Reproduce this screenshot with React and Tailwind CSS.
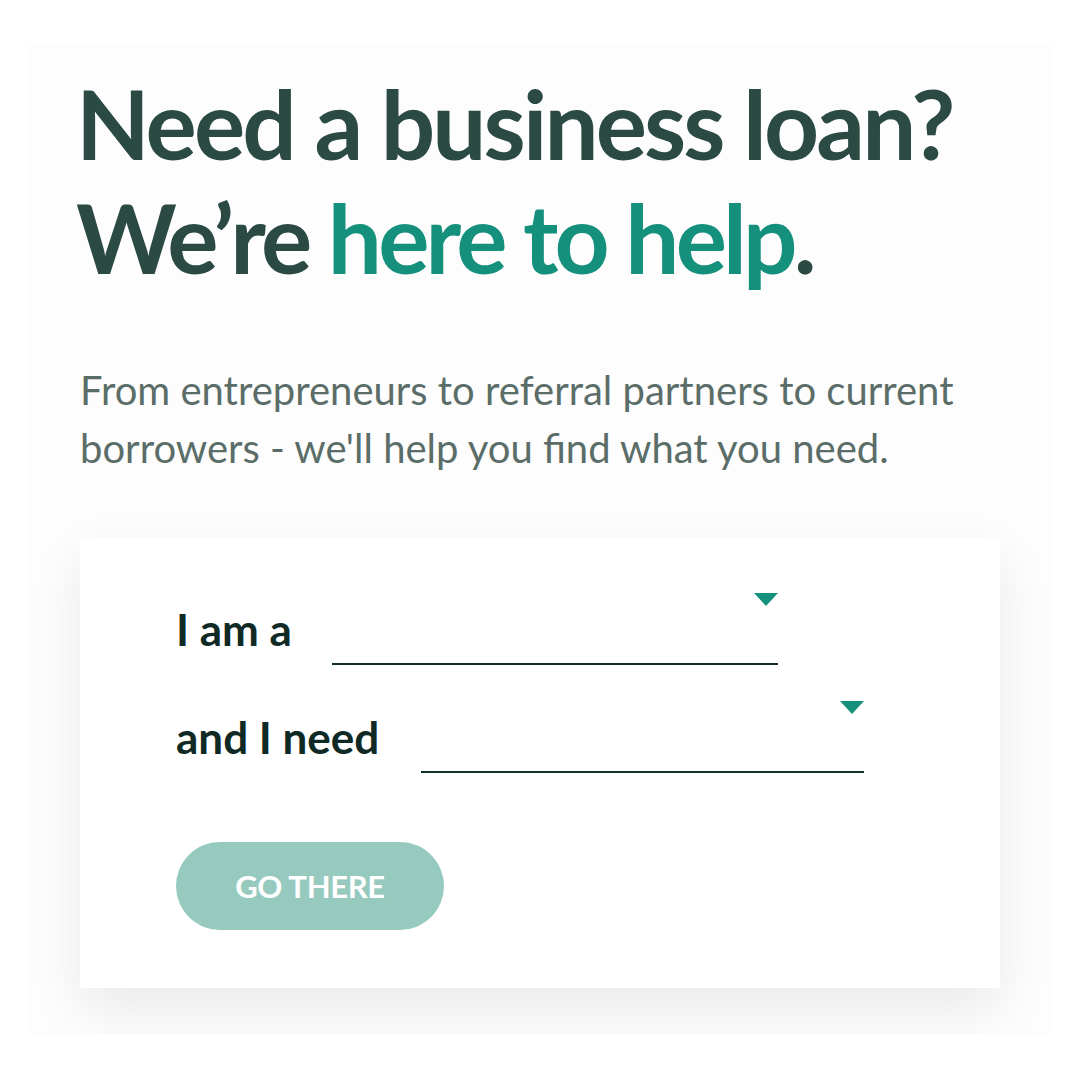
import React from 'react';

function Picker({ width }) {
  return (
    <div className={`relative h-[72px] border-b-2 border-[#12302a] ${width}`}>
      <span className="absolute right-0 top-0 h-0 w-0 border-x-[12px] border-t-[13px] border-x-transparent border-t-[#14907c]" />
    </div>
  );
}

export default function App() {
  return (
    <div className="min-h-[1080px] bg-white pt-[43px] pl-[29px] font-['Lato',sans-serif]">
      <div className="w-[1021px] h-[992px] overflow-hidden bg-[#fdfdfd] pl-[51px] pr-[50px] pt-[23px]">
        <h1 className="-ml-[4px] text-[96px] font-bold leading-[114px] tracking-[-0.03em] text-[#2b4a44]">
          Need a business loan?
          <br />
          <span className="tracking-[-0.04em]">
            We’re <span className="text-[#14907c]">here to help</span>.
          </span>
        </h1>

        <p className="mt-[67px] text-[40px] leading-[58px] text-[#5b6d68]">
          From entrepreneurs to referral partners to current borrowers - we'll help you find what you
          need.
        </p>

        <div className="mt-[60px] bg-white pl-[96px] pr-[40px] pt-[56px] pb-[58px] shadow-[0_22px_50px_rgba(0,0,0,0.08)]">
          <div className="flex items-center gap-10">
            <span className="text-[44px] font-bold leading-[46px] text-[#0f2a25]">I am a</span>
            <Picker width="w-[446px]" />
          </div>
          <div className="mt-[36px] flex items-center gap-[42px]">
            <span className="text-[44px] font-bold leading-[46px] text-[#0f2a25]">and I need</span>
            <Picker width="w-[443px]" />
          </div>

          <button
            type="button"
            className="mt-[69px] flex h-[88px] w-[268px] items-center justify-center rounded-full bg-[#97cabf] text-[31px] font-bold tracking-[-0.01em] text-white"
          >
            GO THERE
          </button>
        </div>
      </div>
    </div>
  );
}
